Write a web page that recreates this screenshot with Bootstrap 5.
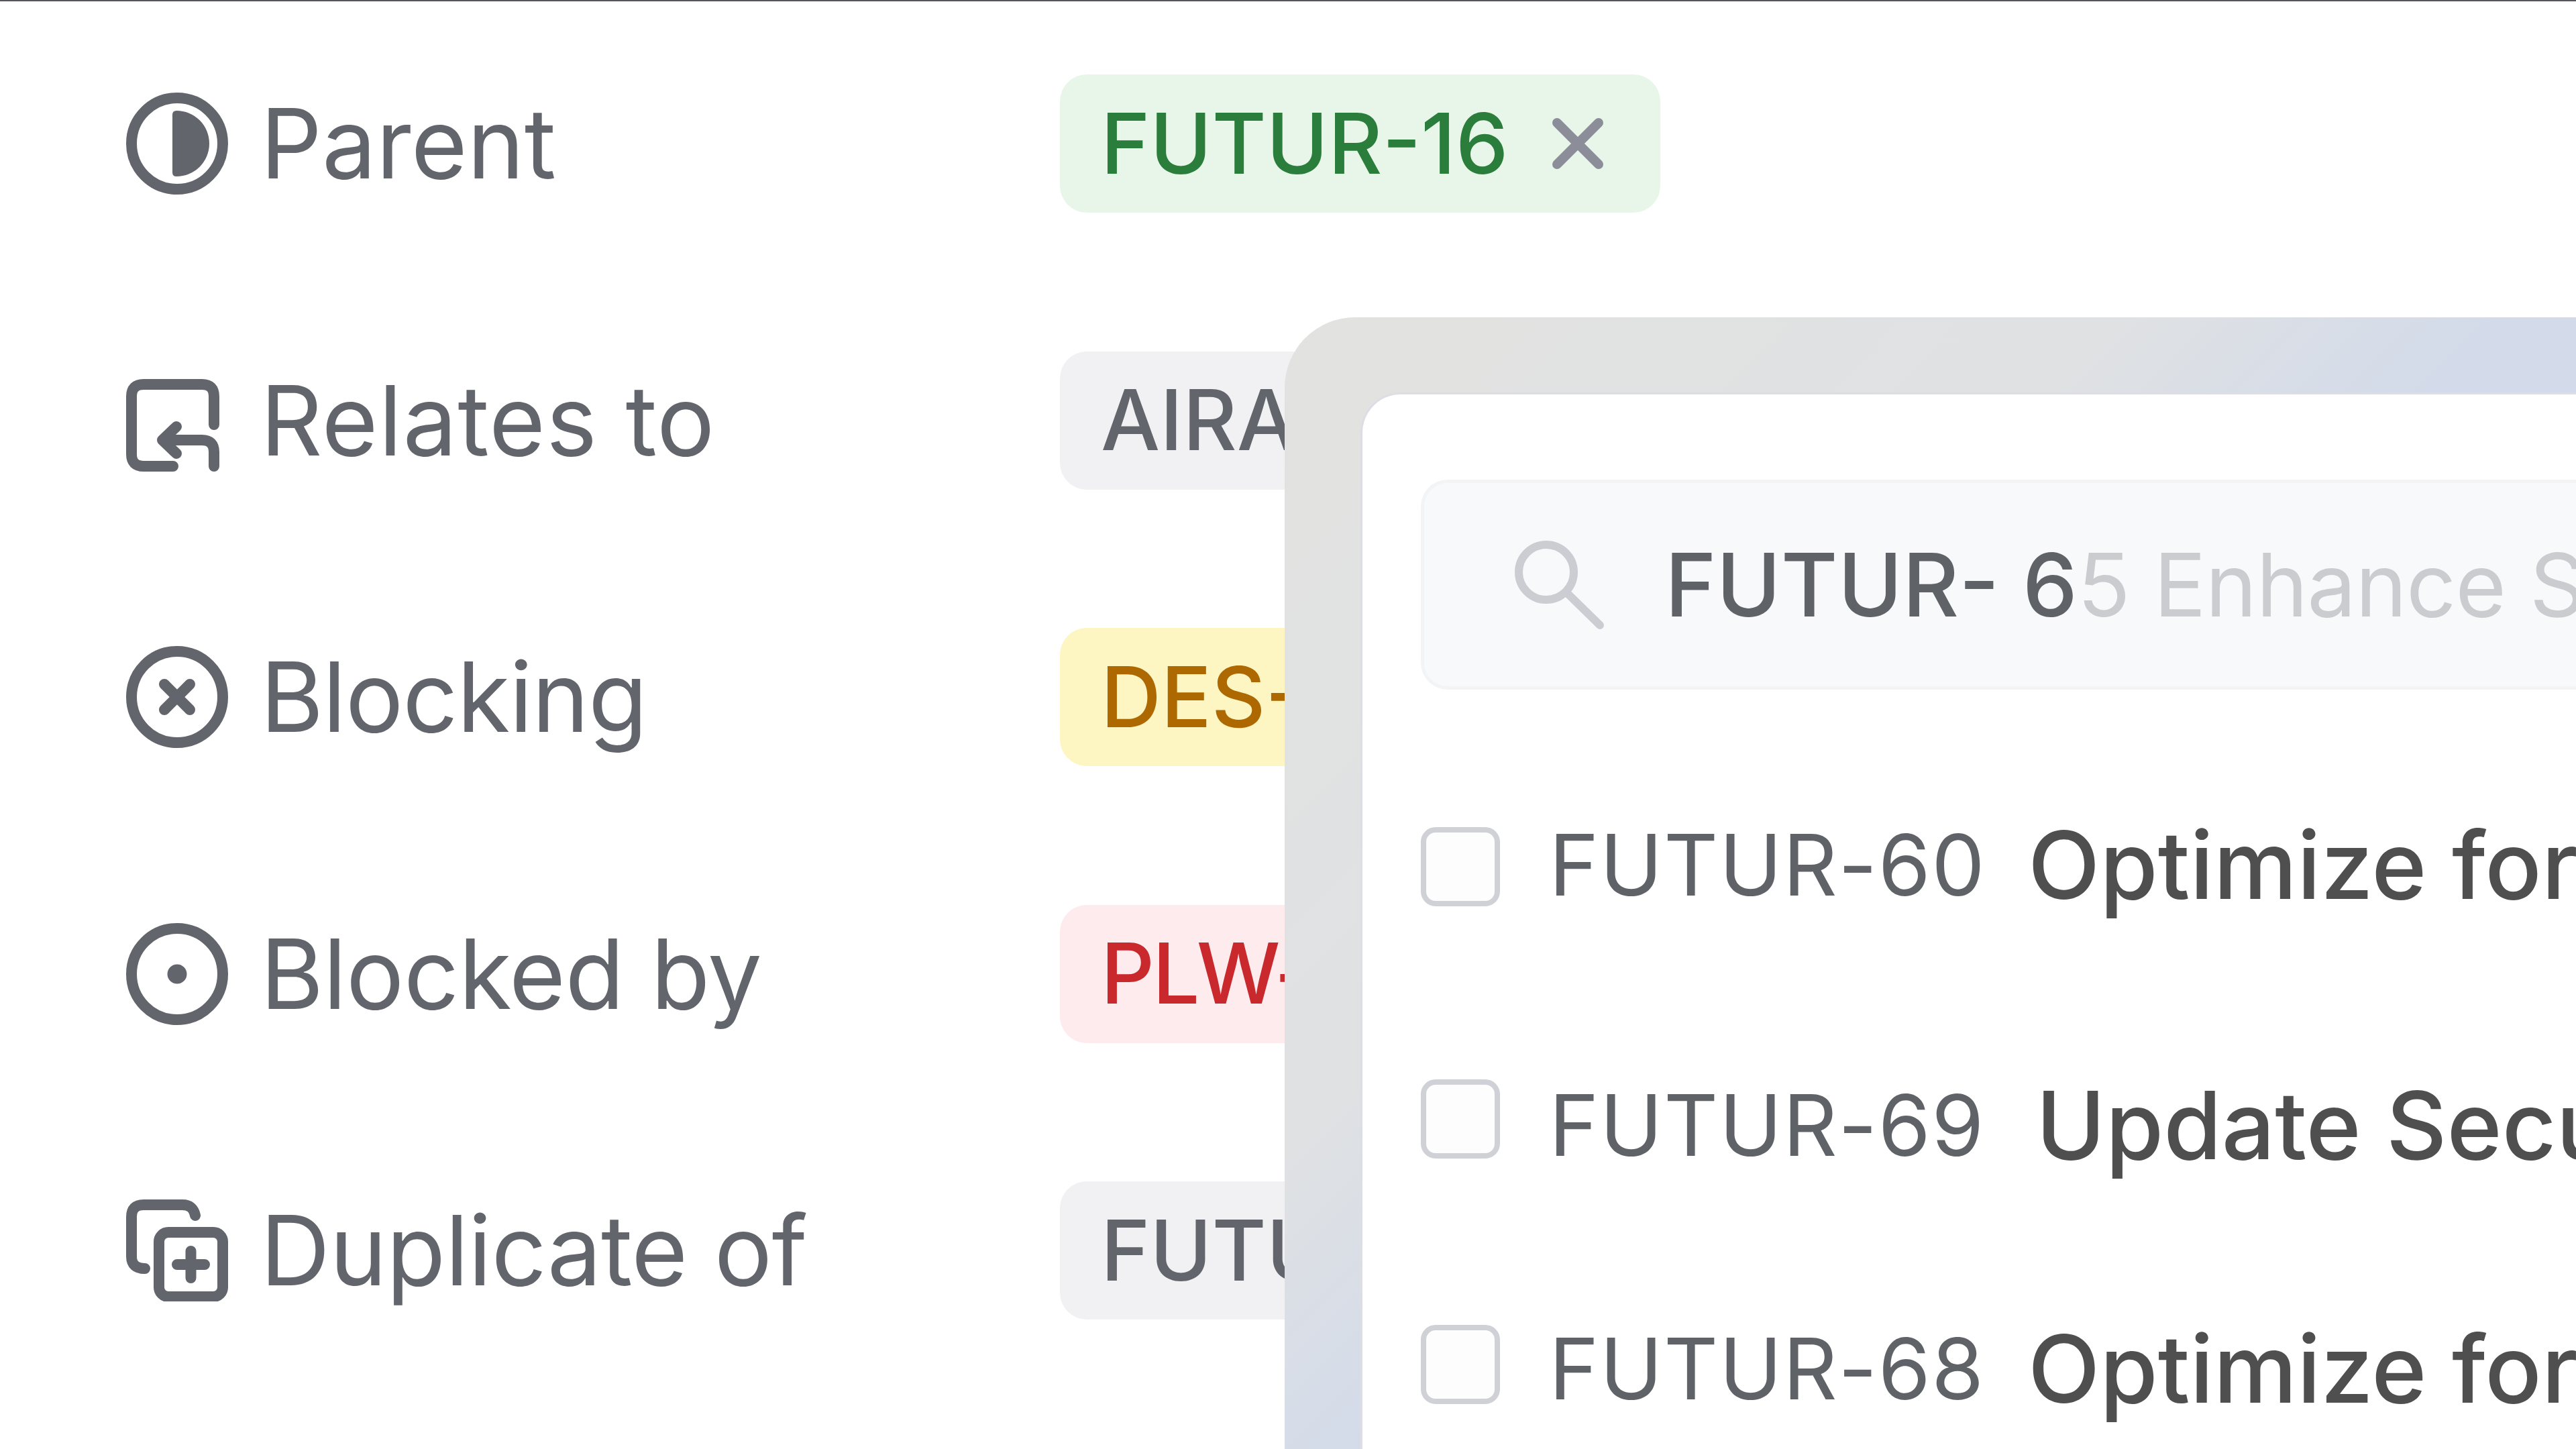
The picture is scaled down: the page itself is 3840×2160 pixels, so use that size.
<!DOCTYPE html>
<html>
<head>
    <meta charset="UTF-8">
    <title>Relations</title>
    <link href="https://cdn.jsdelivr.net/npm/bootstrap@5.3.0/dist/css/bootstrap.min.css" rel="stylesheet">
    <style>
        html, body { height: 100%; }
        body { overflow: hidden; background: #fff; border-top: 2px solid #55575c; font-family: Inter, "Liberation Sans", sans-serif; color: #62656c; }
        .rel-list { padding: 109px 0 0 188px; gap: 206.5px; }
        .rel-row { height: 206px; }
        .rel-label { width: 1392px; gap: 48px; font-size: 144px; letter-spacing: -0.5px; line-height: 1; }
        .rel-label svg { flex: none; fill: none; stroke: #62656c; stroke-width: 16; stroke-linecap: round; stroke-linejoin: round; }
        .label-loose { letter-spacing: 1px; }
        .label-mid { letter-spacing: 0; }
        .label-tight { letter-spacing: -1.100px; }
        .rel-chip { height: 206px; border-radius: 40px; padding: 0 82px 0 61px; font-size: 124.500px; font-weight: 500; line-height: 1; white-space: nowrap; }
        .chip-green { background: #e8f6ea; color: #2a7d3a; }
        .chip-grey { background: #f1f1f3; color: #62656c; }
        .chip-yellow { background: #fdf6c3; color: #ad6800; }
        .chip-red { background: #fdebee; color: #c9282d; letter-spacing: -3px; }
        .chip-x { margin-left: 65px; fill: none; stroke: #8b8e98; stroke-width: 14; stroke-linecap: round; }

        .picker-frame { position: absolute; left: 1915px; top: 473px; right: 0; bottom: 0; padding: 112px 0 0 113px; border-top-left-radius: 105px; background: linear-gradient(135deg, #e2e2e0 0%, #dfe1e3 35%, #d3dbea 50%, #d3dbea 100%); }
        .picker-body { height: 100%; background: #fff; border-top-left-radius: 60px; border-top: 3px solid #dcdee4; border-left: 3px solid #dcdee4; padding: 127px 0 0 87px; overflow: hidden; white-space: nowrap; }
        .picker-search { height: 313px; padding-left: 135px; gap: 90px; background: #f8f9fb; border: 5px solid #f3f4f6; border-right: 0; border-radius: 40px 0 0 40px; font-size: 130px; letter-spacing: -1px; line-height: 1; margin-bottom: 191px; }
        .picker-search svg { flex: none; fill: none; stroke: #cbcdd2; stroke-width: 12; stroke-linecap: round; }
        .typed { color: #5f6368; font-weight: 500; letter-spacing: 0; }
        .ghost { color: #cbcccf; }
        .picker-item { gap: 73px; line-height: 1; }
        .picker-item .form-check-input { flex: none; width: 118px; height: 118px; margin: 0; background-color: #fdfdfd; border: 8px solid #cfd1d6; border-radius: 22px; }
        .picker-item .check-low { margin-top: 6px; }
        .picker-item .check-high { margin-bottom: 18px; }
        .picker-item .check-mid { margin-bottom: 13px; }
        .item-key { font-size: 126px; font-weight: 400; letter-spacing: 1.400px; color: #5f6368; width: 641px; }
        .item-name { font-size: 140px; font-weight: 500; color: #4f4f4f; }
        .name-shift { margin-left: 12px; }
        .item-two { margin-top: 248px; }
        .item-three { margin-top: 223px; }
    </style>
</head>
<body>

    <div class="rel-list d-flex flex-column">
        <div class="rel-row d-flex align-items-center">
            <div class="rel-label label-mid d-flex align-items-center">
                <svg width="152" height="152" viewBox="0 0 152 152"><circle cx="76" cy="76" r="68"/><path d="M69 33q0-6 6-6a49 49 0 0 1 0 98q-6 0-6-6z" fill="#62656c" stroke="none"/></svg>
                <span>Parent</span>
            </div>
            <div class="rel-chip chip-green d-inline-flex align-items-center">
                FUTUR-16
                <svg class="chip-x" width="80" height="80" viewBox="0 0 80 80"><path d="M8 9L70 71M70 9L8 71"/></svg>
            </div>
        </div>
        <div class="rel-row d-flex align-items-center">
            <div class="rel-label label-loose d-flex align-items-center">
                <svg width="152" height="152" viewBox="0 0 152 152"><g transform="translate(0 14)"><path d="M70 130H26Q8 130 8 112V26Q8 8 26 8H113Q131 8 131 26V68M75 71L54 91L75 111M54 91H113Q131 91 131 109V130"/></g></svg>
                <span>Relates to</span>
            </div>
            <div class="rel-chip chip-grey d-inline-flex align-items-center">AIRA</div>
        </div>
        <div class="rel-row d-flex align-items-center">
            <div class="rel-label label-tight d-flex align-items-center">
                <svg width="152" height="152" viewBox="0 0 152 152"><circle cx="76" cy="76" r="68"/><path d="M57 57L95 95M95 57L57 95"/></svg>
                <span>Blocking</span>
            </div>
            <div class="rel-chip chip-yellow d-inline-flex align-items-center">DES-</div>
        </div>
        <div class="rel-row d-flex align-items-center">
            <div class="rel-label d-flex align-items-center">
                <svg width="152" height="152" viewBox="0 0 152 152"><circle cx="76" cy="76" r="68"/><circle cx="76" cy="76" r="14.5" fill="#62656c" stroke="none"/></svg>
                <span>Blocked by</span>
            </div>
            <div class="rel-chip chip-red d-inline-flex align-items-center">PLW-</div>
        </div>
        <div class="rel-row d-flex align-items-center">
            <div class="rel-label d-flex align-items-center">
                <svg width="152" height="152" viewBox="0 0 152 152"><path d="M103 24Q100 8 84 8H26Q8 8 8 26V85Q8 103 28 103"/><rect x="49" y="49" width="95" height="96" rx="14"/><path d="M76 97H117M96.500 77V117"/></svg>
                <span>Duplicate of</span>
            </div>
            <div class="rel-chip chip-grey d-inline-flex align-items-center">FUTU</div>
        </div>
    </div>

    <div class="picker-frame">
        <div class="picker-body">
            <div class="picker-search d-flex align-items-center">
                <svg width="134" height="132" viewBox="0 0 134 132"><circle cx="47" cy="47" r="41"/><path d="M78 78L127 126"/></svg>
                <div><span class="typed">FUTUR- 6</span><span class="ghost">5 Enhance S</span></div>
            </div>
            <div class="picker-item d-flex align-items-center">
                <input class="form-check-input check-low" type="checkbox">
                <span class="item-key">FUTUR-60</span>
                <span class="item-name">Optimize for</span>
            </div>
            <div class="picker-item item-two d-flex align-items-center">
                <input class="form-check-input check-high" type="checkbox">
                <span class="item-key">FUTUR-69</span>
                <span class="item-name name-shift">Update Secu</span>
            </div>
            <div class="picker-item item-three d-flex align-items-center">
                <input class="form-check-input check-mid" type="checkbox">
                <span class="item-key">FUTUR-68</span>
                <span class="item-name">Optimize for</span>
            </div>
        </div>
    </div>

    <script src="https://cdn.jsdelivr.net/npm/bootstrap@5.3.0/dist/js/bootstrap.bundle.min.js"></script>
</body>
</html>
